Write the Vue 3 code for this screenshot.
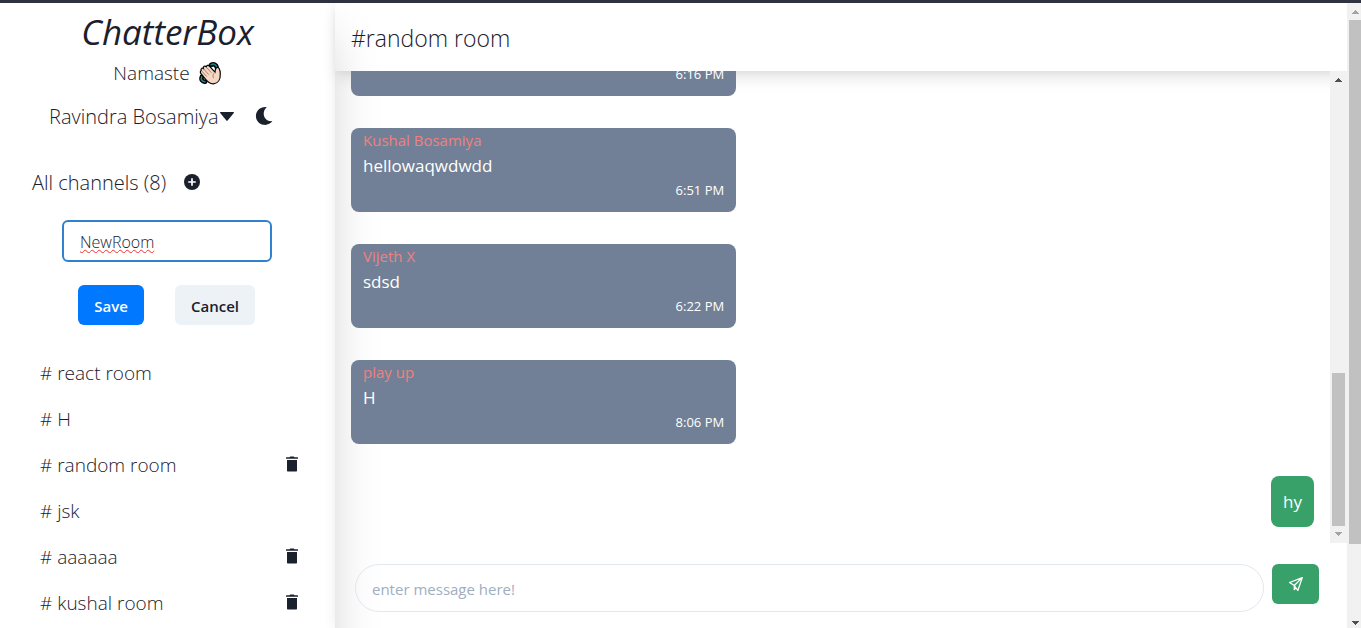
<script setup>
import { ref } from 'vue'

const roomName = ref('NewRoom')
const draft = ref('')

const channels = [
  { name: 'react room', own: false },
  { name: 'H', own: false },
  { name: 'random room', own: true },
  { name: 'jsk', own: false },
  { name: 'aaaaaa', own: true },
  { name: 'kushal room', own: true },
]

const messages = [
  { author: '', text: '', time: '6:16 PM' },
  { author: 'Kushal Bosamiya', text: 'hellowaqwdwdd', time: '6:51 PM' },
  { author: 'Vijeth X', text: 'sdsd', time: '6:22 PM' },
  { author: 'play up', text: 'H', time: '8:06 PM' },
]
</script>

<template>
  <div class="app">
    <div class="strip"></div>
    <div class="page">
      <aside class="sidebar">
        <h1 class="brand">ChatterBox</h1>
        <p class="greeting">
          Namaste
          <svg class="wave" viewBox="0 0 24 24" aria-hidden="true">
            <g fill="none" stroke="#000" stroke-width="4.500" stroke-linecap="round">
              <path d="M13 4c3-1.800 5.400 0 5.800 2.600M4 15.500c-1.500 3 .4 5.500 3.200 5.200" />
            </g>
            <path d="M13 3.800c3-1.800 5.500.2 5.800 3M3.800 15.500c-1.500 3 .4 5.300 3.200 5.200" fill="none" stroke="#1c8490" stroke-width="1.500" stroke-linecap="round" />
            <path d="M3.200 9.500c-.8-2 1-3 2.200-2C4.900 5.400 7 4.300 8.300 6c.2-1.700 2-2.200 3.300-.7l5.400 5.800c.2-2 .5-4.600 2.300-4.800 2.200-.1 2.800 3 3 6.200.3 5.800-2.300 10-6.800 10.300-4 .2-6.300-2.300-8.500-5.200L3 12.700c-1-1.400-.8-2.700.2-3.200z" fill="#f6d7c4" stroke="#000" stroke-width="1.200" />
            <path d="M5.400 7.700l5.400 6M8.300 6.200l5.200 5.700M3.600 9.900l5 5.500M17 11.100c-2 1.600-2.500 3.500-1.400 6" fill="none" stroke="#a5826f" stroke-width="1" />
          </svg>
        </p>
        <div class="user-row">
          <button class="plain user" type="button">
            Ravindra Bosamiya
            <svg class="caret" viewBox="0 0 14 9" aria-hidden="true"><path d="M.6 0h12.800c.6 0 .8.600.4 1L7.600 8.400c-.3.400-.9.400-1.200 0L.2 1C-.2.600 0 0 .6 0z" /></svg>
          </button>
          <button class="plain icon moon" type="button" aria-label="Toggle dark mode">
            <svg viewBox="0 0 20 20" aria-hidden="true"><path d="M12.800 1C9.600 3.800 8.800 8.600 11 12c1.900 2.800 4.600 3.500 7.400 3.100-2.100 3-5.500 4.300-8.900 3.700C5.100 18 1.900 14.300 1.900 9.900 1.900 4.400 6.800.2 12.800 1z" /></svg>
          </button>
        </div>

        <div class="channels-head">
          <h2>All channels (8)</h2>
          <button class="plain icon add" type="button" aria-label="Add channel">
            <svg viewBox="0 0 16 16" aria-hidden="true"><circle cx="8" cy="8" r="8" /><path d="M8 4.200v7.600M4.200 8h7.600" stroke="#fff" stroke-width="1.700" /></svg>
          </button>
        </div>

        <form class="new-room" @submit.prevent>
          <input v-model="roomName" class="room-input" type="text" aria-label="Room name" />
          <div class="form-actions">
            <button class="btn save" type="submit">Save</button>
            <button class="btn cancel" type="button">Cancel</button>
          </div>
        </form>

        <ul class="channels">
          <li v-for="c in channels" :key="c.name">
            <a href="#"># {{ c.name }}</a>
            <button v-if="c.own" class="plain icon trash" type="button" :aria-label="'Delete ' + c.name">
              <svg viewBox="0 0 12 16" aria-hidden="true"><path d="M0 1.700Q0 1.200.5 1.200H3.500L4.300.4H7.700L8.500 1.200H11.500Q12 1.200 12 1.700V2.700H0zM1 4h10v10.400Q11 15.600 9.800 15.600H2.200Q1 15.600 1 14.400z" /></svg>
            </button>
          </li>
        </ul>
      </aside>

      <main class="chat">
        <header class="chat-head"><h2>#random room</h2></header>
        <div class="feed">
          <div class="messages">
            <article v-for="m in messages" :key="m.time" class="message">
              <p v-if="m.author" class="author">{{ m.author }}</p>
              <p v-if="m.text" class="text">{{ m.text }}</p>
              <time class="time">{{ m.time }}</time>
            </article>
            <article class="mine">hy</article>
          </div>
          <div class="scroll inner" aria-hidden="true">
            <svg class="arrow" viewBox="0 0 7 4"><path d="M3 0h1v1h1v1h1v1h1v1H0V3h1V2h1V1h1z" /></svg>
            <div class="track"><div class="thumb"></div></div>
            <svg class="arrow dim" viewBox="0 0 7 4"><path d="M0 0h7v1H6v1H5v1H4v1H3V3H2V2H1V1H0z" /></svg>
          </div>
        </div>
        <form class="composer" @submit.prevent>
          <input v-model="draft" type="text" placeholder="enter message here!" aria-label="Message" />
          <button type="submit" aria-label="Send">
            <svg viewBox="0 0 16 16" aria-hidden="true"><path d="M14.300 1.600L1.600 6.500l4.700 3L9.800 14.500zM14.300 1.600L6.300 9.500v4.200l1.900-2.200" /></svg>
          </button>
        </form>
      </main>

      <div class="scroll outer" aria-hidden="true">
        <svg class="arrow dim" viewBox="0 0 7 4"><path d="M3 0h1v1h1v1h1v1h1v1H0V3h1V2h1V1h1z" /></svg>
        <div class="track"><div class="thumb"></div></div>
        <svg class="arrow" viewBox="0 0 7 4"><path d="M0 0h7v1H6v1H5v1H4v1H3V3H2V2H1V1H0z" /></svg>
      </div>
    </div>
  </div>
</template>

<style>
body {
  margin: 0;
}
</style>

<style scoped>
* {
  box-sizing: border-box;
}
.app {
  display: flex;
  flex-direction: column;
  height: 100vh;
  overflow: hidden;
  background: #fff;
  color: #1a202c;
  font-family: "Open Sans", "Noto Sans", sans-serif;
  font-weight: 400;
}
h1, h2, p, ul {
  margin: 0;
  padding: 0;
  font-weight: inherit;
}
button, input {
  font-family: inherit;
  color: inherit;
}
svg {
  display: block;
  fill: currentColor;
}
.strip {
  flex: none;
  height: 3px;
  background: #2f3241;
}
.page {
  flex: 1;
  min-height: 0;
  display: flex;
  overflow: hidden;
}
.plain {
  padding: 0;
  border: 0;
  background: none;
  font-size: inherit;
  font-weight: inherit;
  line-height: inherit;
  cursor: pointer;
}
.icon {
  padding-bottom: 2px;
}

/* Sidebar */
.sidebar {
  flex: 0 0 335px;
  margin-bottom: -80px;
  box-shadow: 0 25px 50px -12px rgba(0, 0, 0, 0.25);
  font-weight: 300;
}
.brand {
  padding-top: 3px;
  font-size: 35px;
  font-style: italic;
  font-weight: 400;
  line-height: 52px;
  text-align: center;
}
.greeting {
  display: flex;
  justify-content: center;
  align-items: center;
  gap: 8px;
  margin-top: 1px;
  font-size: 19px;
  line-height: 28px;
}
.wave {
  width: 24px;
  height: 24px;
}
.user-row {
  display: flex;
  align-items: center;
  margin-top: 15px;
  padding-left: 49px;
  font-size: 20px;
  line-height: 30px;
}
.user {
  display: flex;
  align-items: center;
  gap: 1px;
}
.caret {
  width: 14px;
  height: 9px;
  margin-bottom: 2px;
}
.moon {
  margin-left: 20px;
}
.moon svg {
  width: 20px;
  height: 20px;
}
.channels-head {
  display: flex;
  align-items: center;
  gap: 18px;
  margin-top: 37px;
  padding-left: 32px;
  line-height: 28px;
}
.channels-head h2 {
  font-size: 20px;
}
.add svg {
  width: 16px;
  height: 16px;
}
.new-room {
  margin-top: 23px;
  padding: 0 63px 0 62px;
}
.room-input {
  display: block;
  width: 100%;
  height: 42px;
  padding: 2px 16px 0;
  border: 2px solid #3182ce;
  border-radius: 6px;
  outline: 0;
  background: #fff;
  font-size: 16px;
  font-weight: 300;
  text-decoration: underline wavy #f03030 1px;
}
.form-actions {
  display: flex;
  gap: 31px;
  margin-top: 23px;
  padding-left: 16px;
}
.btn {
  height: 40px;
  padding: 2px 0 0;
  border: 0;
  border-radius: 6px;
  font-size: 15px;
  font-weight: 600;
}
.save {
  width: 66px;
  background: #0078ff;
  color: #fff;
}
.cancel {
  width: 80px;
  background: #edf2f7;
}
.channels {
  margin-top: 25px;
  padding: 0 37px 0 40px;
  list-style: none;
  font-size: 19px;
}
.channels li {
  display: flex;
  justify-content: space-between;
  align-items: center;
  height: 46px;
}
.channels a {
  color: inherit;
  text-decoration: none;
}
.trash svg {
  width: 12px;
  height: 16px;
}

/* Chat */
.chat {
  flex: 1;
  min-width: 0;
  display: flex;
  flex-direction: column;
  box-shadow: 0 0 12px rgba(0, 0, 0, 0.08);
}
.chat-head {
  flex: none;
  height: 68px;
  padding: 0 16px;
  box-shadow: 0 10px 15px -3px rgba(0, 0, 0, 0.1), 0 4px 6px -2px rgba(0, 0, 0, 0.05);
}
.chat-head h2 {
  font-size: 23px;
  font-weight: 300;
  line-height: 71px;
}
.feed {
  flex: 1;
  min-height: 0;
  display: flex;
}
.messages {
  flex: 1;
  display: flex;
  flex-direction: column;
  justify-content: flex-end;
  align-items: flex-start;
  gap: 32px;
  padding: 16px;
  overflow: hidden;
}
.message {
  flex: none;
  display: flex;
  flex-direction: column;
  width: 40%;
  height: 84px;
  padding: 0 12px 10px;
  border-radius: 8px;
  background: #718096;
  color: #fff;
}
.author {
  color: #f08080;
  font-size: 15px;
  line-height: 25px;
}
.text {
  font-size: 17px;
  line-height: 25px;
}
.time {
  margin-top: auto;
  font-size: 13px;
  line-height: 24px;
  text-align: right;
}
.mine {
  flex: none;
  align-self: flex-end;
  padding: 0 12px;
  border-radius: 8px;
  background: #38a169;
  color: #fff;
  font-size: 17px;
  line-height: 51px;
}
.composer {
  flex: none;
  display: flex;
  gap: 8px;
  padding: 21px 28px 16px 20px;
}
.composer input {
  flex: 1;
  min-width: 0;
  height: 48px;
  padding: 2px 16px 0;
  border: 1px solid #e2e8f0;
  border-radius: 24px;
  outline: 0;
  background: transparent;
  font-size: 15px;
  font-weight: 400;
}
.composer input::placeholder {
  color: #a0aec0;
  opacity: 1;
}
.composer button {
  display: grid;
  place-items: center;
  width: 47px;
  height: 40px;
  padding: 0;
  border: 0;
  border-radius: 6px;
  background: #38a169;
}
.composer svg {
  width: 16px;
  height: 16px;
  fill: none;
  stroke: #fff;
  stroke-width: 1.3;
  stroke-linejoin: round;
}

/* Scrollbars */
.scroll {
  flex: none;
  display: flex;
  flex-direction: column;
  align-items: center;
  width: 17px;
  padding: 7px 0;
  background: #f1f1f1;
}
.outer {
  margin-right: -3px;
  padding-bottom: 3px;
}
.arrow {
  flex: none;
  width: 7px;
  height: 4px;
  color: #505050;
}
.arrow.dim {
  color: #a3a3a3;
}
.track {
  flex: 1;
  display: flex;
  flex-direction: column;
  width: 13px;
  margin: 6px 0;
}
.thumb {
  height: 88%;
  background: #c1c1c1;
}
.inner .thumb {
  height: 35%;
  margin-top: auto;
}
</style>
